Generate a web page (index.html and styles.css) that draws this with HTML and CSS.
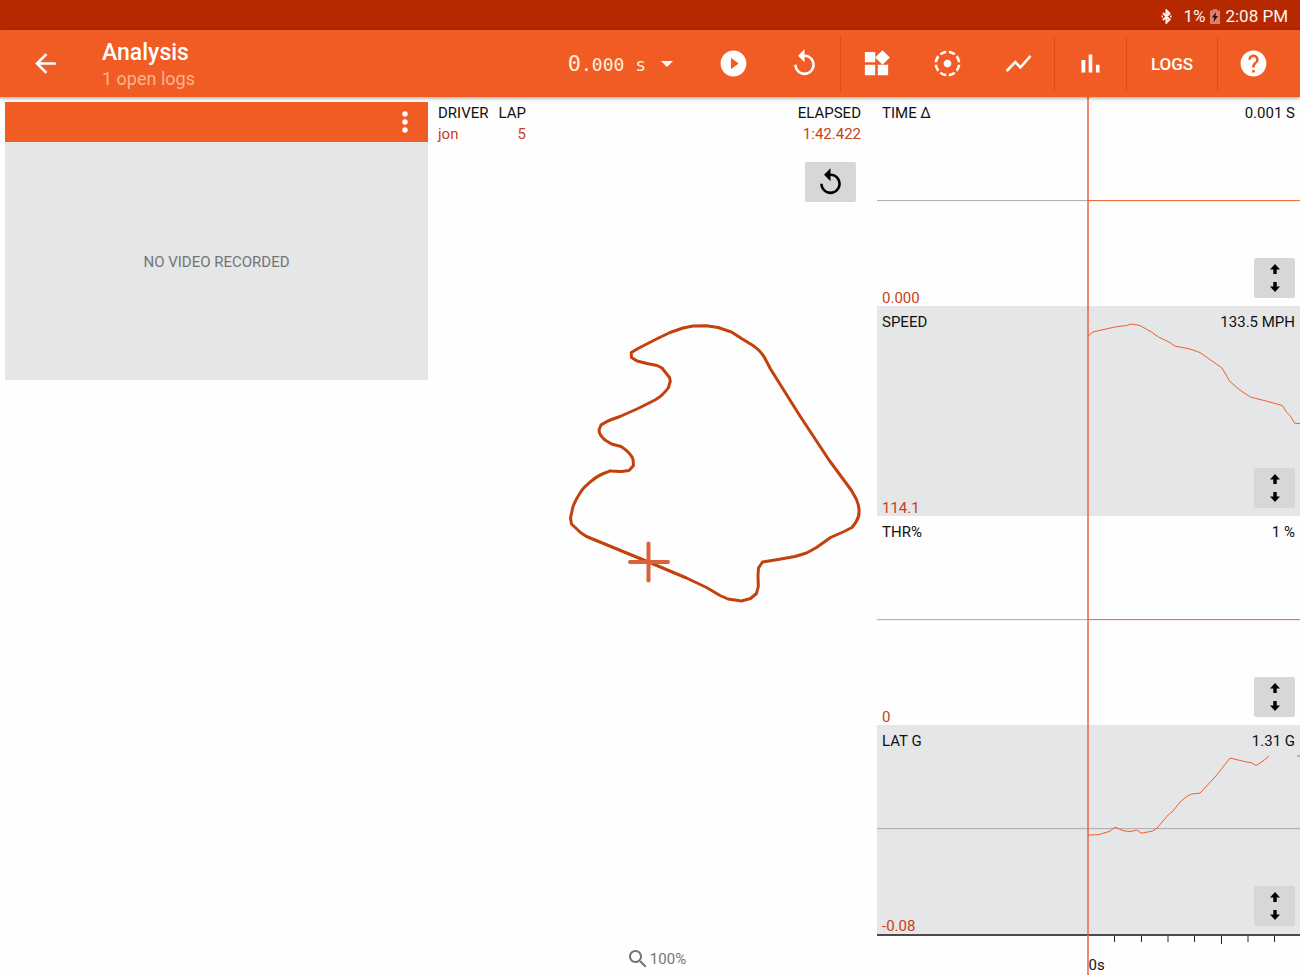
FILE: index.html
```html
<!DOCTYPE html>
<html lang="en">
<head>
<meta charset="utf-8">
<meta name="viewport" content="width=device-width, initial-scale=1">
<title>Analysis</title>
<link rel="stylesheet" href="styles.css">
</head>
<body>
<div class="app">
  <div class="status">
    <svg class="status-bt" viewBox="0 0 11 15" aria-hidden="true"><path d="M2 4l6.500 6.500L5.500 13.500V1.500L8.500 4.500 2 11M.5 7.500h1.500M9 7.500h1.500"/></svg>
    <span>1%</span>
    <svg class="status-battery" viewBox="0 0 10 15" aria-hidden="true"><path class="battery-shell" d="M3 0h4v1.500h3V15H0V1.500h3z"/><path class="battery-bolt" d="M6 3L2 8.500h2.300L3.500 13 8 7H5.500z"/></svg>
    <span>2:08 PM</span>
  </div>

  <header class="appbar">
    <button class="back" aria-label="Back"><svg class="icon" viewBox="0 0 24 24"><path d="M20 11H7.830l5.590-5.590L12 4l-8 8 8 8 1.410-1.410L7.830 13H20v-2z"/></svg></button>
    <div class="heading">
      <h1>Analysis</h1>
      <p>1 open logs</p>
    </div>
    <button class="time" aria-haspopup="listbox"><span class="time-value"><span class="time-big">0</span>.000 s</span><svg class="caret" viewBox="0 0 12 6" aria-hidden="true"><path d="M0 0h12L6 6z"/></svg></button>
    <button class="tool" aria-label="Play"><svg class="icon" viewBox="0 0 24 24"><path d="M12 2C6.480 2 2 6.480 2 12s4.480 10 10 10 10-4.480 10-10S17.520 2 12 2zm-2 14.500v-9l6 4.500-6 4.500z"/></svg></button>
    <button class="tool" aria-label="Restart"><svg class="icon" viewBox="0 0 24 24"><path d="M12 5V1L7 6l5 5V7c3.310 0 6 2.690 6 6s-2.690 6-6 6-6-2.690-6-6H4c0 4.420 3.580 8 8 8s8-3.580 8-8-3.580-8-8-8z"/></svg></button>
    <button class="tool divided" aria-label="Widgets"><svg class="icon" viewBox="0 0 24 24"><path d="M13 13v8h8v-8h-8zM3 21h8v-8H3v8zM3 3v8h8V3H3zm13.660-1.310L11 7.340 16.660 13l5.660-5.660-5.660-5.650z"/></svg></button>
    <button class="tool" aria-label="Center"><svg class="icon" viewBox="0 0 24 24"><path d="M11 4.070V2.050c-2.010.2-3.840 1-5.320 2.210L7.100 5.690c1.110-.86 2.440-1.440 3.900-1.620zm7.320.19C16.840 3.050 15.010 2.250 13 2.050v2.020c1.460.18 2.790.76 3.900 1.620l1.420-1.430zM19.930 11h2.020c-.2-2.010-1-3.840-2.210-5.320L18.310 7.100c.86 1.110 1.440 2.440 1.620 3.900zM5.690 7.100L4.260 5.680C3.050 7.160 2.250 8.990 2.050 11h2.020c.18-1.460.76-2.790 1.620-3.900zM4.070 13H2.050c.2 2.010 1 3.840 2.210 5.320l1.430-1.430c-.86-1.100-1.440-2.430-1.620-3.890zM15 12c0-1.660-1.340-3-3-3s-3 1.340-3 3 1.340 3 3 3 3-1.340 3-3zm3.310 4.900l1.430 1.430c1.210-1.480 2.010-3.320 2.210-5.320h-2.020c-.18 1.450-.76 2.780-1.620 3.890zM13 19.930v2.020c2.010-.2 3.840-1 5.320-2.210l-1.430-1.430c-1.100.86-2.430 1.440-3.890 1.620zm-7.320-.19C7.160 20.950 9 21.750 11 21.950v-2.020c-1.460-.18-2.790-.76-3.900-1.620l-1.420 1.430z"/></svg></button>
    <button class="tool" aria-label="Line chart"><svg class="icon" viewBox="0 0 24 24"><path d="M3.500 18.490l6-6.010 4 4L22 6.920l-1.410-1.410-7.090 7.970-4-4L2 16.990z"/></svg></button>
    <button class="tool divided" aria-label="Bar chart"><svg class="icon" viewBox="0 0 24 24"><path d="M5 9.200h3V19H5zM10.600 5h2.800v14h-2.800zm5.600 8H19v6h-2.800z"/></svg></button>
    <button class="tool tool-text divided">LOGS</button>
    <button class="tool divided" aria-label="Help"><svg class="icon" viewBox="0 0 24 24"><path d="M12 2C6.480 2 2 6.480 2 12s4.480 10 10 10 10-4.480 10-10S17.520 2 12 2zm1 17h-2v-2h2v2zm2.070-7.750l-.9.920C13.450 12.900 13 13.500 13 15h-2v-.5c0-1.100.45-2.100 1.170-2.830l1.240-1.260c.37-.36.59-.86.59-1.410 0-1.100-.9-2-2-2s-2 .9-2 2H8c0-2.210 1.790-4 4-4s4 1.790 4 4c0 .88-.36 1.680-.93 2.250z"/></svg></button>
  </header>

  <main class="board">
    <section class="video">
      <div class="video-bar">
        <button class="more" aria-label="Video options"><svg viewBox="0 0 6 22"><circle cx="3" cy="3" r="2.700"/><circle cx="3" cy="11" r="2.700"/><circle cx="3" cy="19" r="2.700"/></svg></button>
      </div>
      <div class="video-empty">NO VIDEO RECORDED</div>
    </section>

    <section class="map">
      <table class="laps">
        <thead><tr><th>DRIVER</th><th class="num">LAP</th><th class="num last">ELAPSED</th></tr></thead>
        <tbody><tr><td>jon</td><td class="num">5</td><td class="num last">1:42.422</td></tr></tbody>
      </table>
      <button class="key reset" aria-label="Reset map"><svg class="icon" viewBox="0 0 24 24"><path d="M12 5V1L7 6l5 5V7c3.310 0 6 2.690 6 6s-2.690 6-6 6-6-2.690-6-6H4c0 4.420 3.580 8 8 8s8-3.580 8-8-3.580-8-8-8z"/></svg></button>
      <svg class="track" viewBox="433 202 444 740" role="img" aria-label="Track map">
        <path class="track-line" d="M648.500 562L586.500 536.500 580.500 532.500 571.500 524 570.500 518 573 506.500Q576 499 580 493T587 485Q595 477 603.500 473.500T610.500 471L621.500 471.500 629 470.500 633.500 465.500 633 459Q630 452 621 446.500L611.500 444 605 440Q598 434 599.300 429L601 425Q606 421.500 611.500 419.500L620 416.500 638 408.500 655 400Q663 395.500 668.500 387.500L670.300 381 669.500 377.500 662 368 657 365.500 647 363.500 637 361 631.500 357.500 631.300 352.500 638 348.500 656.500 339 670 332.500 683 328 693 326 706.500 325.700 718 327.500 731.500 332 741.500 338.500 753 345.500Q761 351 765 358.500L770.500 369 800 416 829 460 851.500 490.500 856.500 499.500Q862 513 856 522L852 527.500 843 532 830.500 537.500 816.500 547.500 806.500 553 795 556.500 778 559.500 762.500 562 758.500 568 758 575 758.300 586.500 756.500 593.500 750.500 598.500 741.500 601 728 599 720 595.500 706.500 587.500 686.500 578Z"/>
        <path class="track-cursor" d="M630 562h38M648.500 543.500v37"/>
      </svg>
      <div class="zoom">
        <svg viewBox="3 3 18 18" aria-hidden="true"><path d="M15.500 14h-.79l-.28-.27C15.410 12.590 16 11.110 16 9.500 16 5.910 13.090 3 9.500 3S3 5.910 3 9.500 5.910 16 9.500 16c1.610 0 3.090-.59 4.230-1.570l.27.28v.79l5 4.990L20.490 19l-4.990-5zm-6 0C7.010 14 5 11.990 5 9.500S7.010 5 9.500 5 14 7.010 14 9.500 11.990 14 9.500 14z"/></svg>
        <span>100%</span>
      </div>
    </section>

    <section class="charts">
      <article class="chart">
        <svg class="plot" viewBox="0 0 423 209" preserveAspectRatio="none" aria-hidden="true"><path class="zero" d="M0 103.500h211"/><path class="trace" d="M211 103.500h212"/></svg>
        <div class="chart-row"><h2>TIME Δ</h2><span>0.001 S</span></div>
        <div class="chart-row chart-foot"><span class="low">0.000</span><button class="key scale" aria-label="Scale time"><svg viewBox="0 0 10 28"><path d="M5 0l5 5.500H6.700V10H3.300V5.500H0zM5 28l5-5.500H6.700V18H3.300v4.500H0z"/></svg></button></div>
      </article>
      <article class="chart shaded">
        <svg class="plot" viewBox="0 0 423 209" preserveAspectRatio="none" aria-hidden="true"><path class="trace" d="M211 30L216 26 224.500 24 238 21 249.500 19.500 254.500 18 263 19.500 274.500 26 281.500 31 291 35.500 298 40 313 43 323 46.500 338 57 345 62 353 75.500 363 84 373.500 91 389.500 95 405.500 99.500 409.500 106 413.500 110 417.500 117 423 117.500"/></svg>
        <div class="chart-row"><h2>SPEED</h2><span>133.5 MPH</span></div>
        <div class="chart-row chart-foot"><span class="low">114.1</span><button class="key scale" aria-label="Scale speed"><svg viewBox="0 0 10 28"><path d="M5 0l5 5.500H6.700V10H3.300V5.500H0zM5 28l5-5.500H6.700V18H3.300v4.500H0z"/></svg></button></div>
      </article>
      <article class="chart">
        <svg class="plot" viewBox="0 0 423 209" preserveAspectRatio="none" aria-hidden="true"><path class="zero" d="M0 103.500h211"/><path class="trace" d="M211 103.500h212"/></svg>
        <div class="chart-row"><h2>THR%</h2><span>1 %</span></div>
        <div class="chart-row chart-foot"><span class="low">0</span><button class="key scale" aria-label="Scale throttle"><svg viewBox="0 0 10 28"><path d="M5 0l5 5.500H6.700V10H3.300V5.500H0zM5 28l5-5.500H6.700V18H3.300v4.500H0z"/></svg></button></div>
      </article>
      <article class="chart shaded">
        <svg class="plot" viewBox="0 0 423 209" preserveAspectRatio="none" aria-hidden="true"><path class="zero" d="M0 103.500h423"/><path class="trace" d="M211 110L222 109.500 233 106 238 102 246 105.500 253 106.500 259.500 105 264.500 108 275.500 106 280 103 291 90 296 86 303 77 309.500 71.500 314.500 69 323 68 338 52 346 42 353 33 369.500 37 374 37.500 379 40.500 386 36 392 31M420 31h3"/></svg>
        <div class="chart-row"><h2>LAT G</h2><span>1.31 G</span></div>
        <div class="chart-row chart-foot"><span class="low">-0.08</span><button class="key scale" aria-label="Scale lateral G"><svg viewBox="0 0 10 28"><path d="M5 0l5 5.500H6.700V10H3.300V5.500H0zM5 28l5-5.500H6.700V18H3.300v4.500H0z"/></svg></button></div>
      </article>
      <div class="axis">
        <svg class="ticks" viewBox="0 0 423 8" preserveAspectRatio="none" aria-hidden="true"><path d="M237.500 0v6M264.500 0v6M291 0v6M317.500 0v6M344.500 0v8M371 0v6M397.500 0v6"/></svg>
        <span class="axis-label">0s</span>
      </div>
      <div class="cursor"></div>
    </section>
  </main>
</div>
</body>
</html>
```
FILE: styles.css
```css
* { box-sizing: border-box; }

body {
  margin: 0;
  background: #fefefe;
  color: #111;
  font: 15px/20px Roboto, sans-serif;
}

button {
  padding: 0;
  border: 0;
  background: none;
  color: inherit;
  font: inherit;
  cursor: pointer;
}

h1, h2, p { margin: 0; font-weight: 400; }
svg { display: block; fill: currentColor; }

.app { display: flex; flex-direction: column; min-height: 100vh; }

/* Status bar */
.status {
  display: flex;
  align-items: center;
  justify-content: flex-end;
  gap: 5px;
  height: 30px;
  padding: 2px 12px 0 0;
  background: #b62900;
  color: #fff3ee;
  font-size: 17px;
}
.status-bt { width: 11px; height: 15px; margin-right: 6px; fill: none; stroke: currentColor; stroke-width: 2; }
.status-battery { width: 10px; height: 15px; }
.battery-shell { fill: #d9806a; }
.battery-bolt { fill: #2c0f08; }

/* App bar */
.appbar {
  position: relative;
  z-index: 1;
  display: flex;
  align-items: center;
  height: 67px;
  padding: 0 11px 0 30px;
  background: #f15c25;
  color: #fff;
  box-shadow: 0 1px 4px rgba(0, 0, 0, 0.4);
}
.icon { width: 31px; height: 31px; }
.back { margin-right: 41px; }
.heading { flex: 1; padding-top: 3px; }
.heading h1 { font-size: 23px; font-weight: 500; line-height: 28px; }
.heading p { color: #fbb48f; font-size: 18px; line-height: 24px; }
.time { display: flex; align-items: center; gap: 15px; padding-right: 25px; }
.time-value { padding-top: 2px; font: 18px/28px "DejaVu Sans Mono", monospace; color: #fff0dc; }
.time-big { font-size: 22px; }
.caret { width: 12px; height: 6px; }
.tool {
  display: flex;
  align-items: center;
  justify-content: center;
  width: 71px;
  height: 56px;
}
.divided { width: 72px; border-left: 1px solid #d94f1d; }
.tool-text { width: 91px; padding-top: 1px; font-size: 17px; font-weight: 500; }

/* Three columns */
.board { flex: 1; display: grid; grid-template-columns: 433fr 444fr 423fr; }

.video { padding: 5px; }
.video-bar {
  display: flex;
  align-items: center;
  justify-content: flex-end;
  height: 40px;
  padding-right: 20px;
  background: #f15c25;
  color: #fff;
}
.more svg { width: 6px; height: 22px; }
.video-empty {
  display: flex;
  align-items: center;
  justify-content: center;
  aspect-ratio: 16 / 9;
  padding-top: 2px;
  background: #e5e6e7;
  color: #757575;
}

.map { display: flex; flex-direction: column; }
.laps { width: 100%; padding: 6px 16px 0 5px; border-spacing: 0; line-height: 21px; }
.laps th, .laps td { padding: 0 10px 0 0; font-weight: 400; text-align: left; }
.laps td { color: #c8401a; }
.laps .num { text-align: right; width: 1px; }
.laps th:first-child { width: 1px; }
.laps .last { width: auto; padding-right: 0; }

.key {
  display: flex;
  align-items: center;
  justify-content: center;
  height: 40px;
  border-radius: 2px;
  background: #d6d7d7;
  color: #000;
}
.reset { align-self: flex-end; width: 51px; margin: 17px 21px 0 0; }
.track { flex: 1; width: 100%; min-height: 0; fill: none; }
.track-line { stroke: #c2410c; stroke-width: 3; stroke-linejoin: round; }
.track-cursor { stroke: #d9623a; stroke-width: 4; stroke-linecap: round; }
.zoom {
  display: flex;
  align-items: center;
  justify-content: center;
  gap: 3px;
  height: 33px;
  padding-left: 5px;
  color: #757575;
}
.zoom svg { width: 18px; height: 18px; }

.charts { position: relative; display: flex; flex-direction: column; min-width: 0; }
.chart {
  position: relative;
  flex: 1;
  display: flex;
  flex-direction: column;
  justify-content: space-between;
  padding: 6px 5px 0;
}
.shaded { background: #e5e6e7; }
.plot { position: absolute; inset: 0; width: 100%; height: 100%; fill: none; }
.plot path { vector-effect: non-scaling-stroke; stroke-width: 1; }
.zero { stroke: #a9aaab; }
.trace { stroke: #ee5f2d; }
.chart-row { position: relative; display: flex; justify-content: space-between; }
.chart h2 { font-size: 15px; }
.chart-foot { align-items: flex-end; }
.low { color: #c8401a; line-height: 16px; }
.scale { width: 41px; margin-bottom: 8px; }
.scale svg { width: 10px; height: 28px; }

.axis { height: 41px; border-top: 2px solid #4a4a4c; }
.ticks { width: 100%; height: 8px; fill: none; stroke: #222; }
.ticks path { vector-effect: non-scaling-stroke; stroke-width: 1; }
.axis-label { display: block; margin: 11px 0 0 50%; line-height: 20px; }

/* Playback position, drawn over every chart */
.cursor {
  position: absolute;
  top: 0;
  bottom: 0;
  left: 50%;
  width: 2px;
  margin-left: -2px;
  background: #ee6044;
  opacity: 0.75;
}
```
